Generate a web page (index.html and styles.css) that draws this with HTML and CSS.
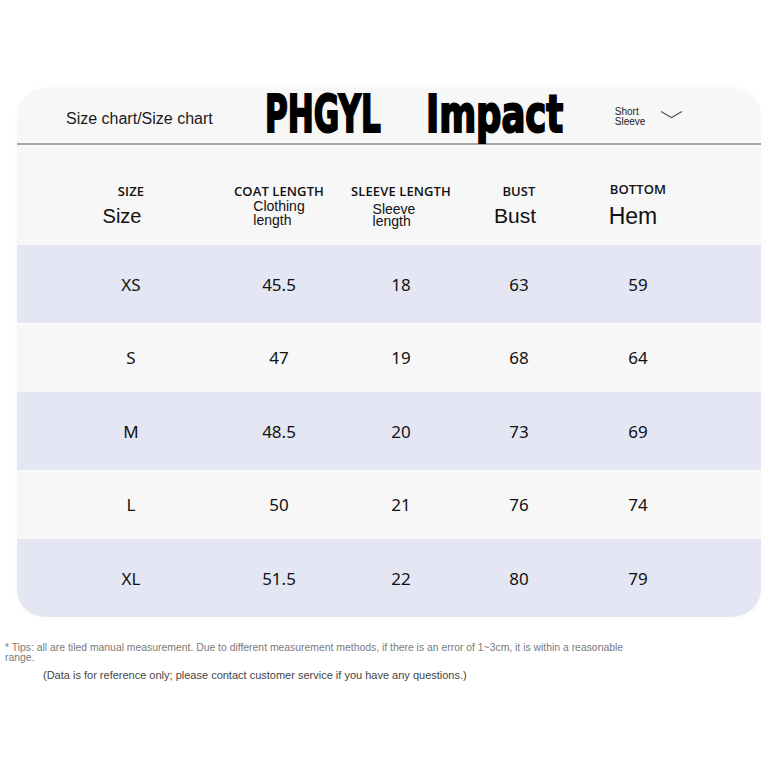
FILE: index.html
```html
<!DOCTYPE html>
<html lang="en">
<head>
<meta charset="utf-8">
<title>Size chart</title>
<link rel="stylesheet" href="styles.css">
</head>
<body>
<div class="page">
  <section class="card">
    <div class="titlebar">
      <span class="title">Size chart/Size chart</span>
      <span class="brand brand--a">PHGYL</span>
      <span class="brand brand--b">Impact</span>
      <span class="sleeve">Short<br>Sleeve</span>
      <svg class="chevron" width="23" height="9" viewBox="0 0 23 9"><polyline points="1,1.5 11.5,7.5 22,1.5" fill="none" stroke="#555" stroke-width="1.1"/></svg>
    </div>
    <div class="grid head">
      <div class="cell"><div class="cap">SIZE</div><div class="sub sub--big">Size</div></div>
      <div class="cell"><div class="cap">COAT LENGTH</div><div class="sub sub--two">Clothing<br>length</div></div>
      <div class="cell"><div class="cap">SLEEVE LENGTH</div><div class="sub sub--two sub--sleeve">Sleeve<br>length</div></div>
      <div class="cell"><div class="cap">BUST</div><div class="sub sub--bust">Bust</div></div>
      <div class="cell"><div class="cap cap--up">BOTTOM</div><div class="sub sub--hem">Hem</div></div>
    </div>
    <div class="grid row row--tint row--tall"><div class="cell">XS</div><div class="cell">45.5</div><div class="cell">18</div><div class="cell">63</div><div class="cell">59</div></div>
    <div class="grid row row--plain row--short"><div class="cell">S</div><div class="cell">47</div><div class="cell">19</div><div class="cell">68</div><div class="cell">64</div></div>
    <div class="grid row row--tint row--tall"><div class="cell">M</div><div class="cell">48.5</div><div class="cell">20</div><div class="cell">73</div><div class="cell">69</div></div>
    <div class="grid row row--plain row--short"><div class="cell">L</div><div class="cell">50</div><div class="cell">21</div><div class="cell">76</div><div class="cell">74</div></div>
    <div class="grid row row--tint row--tall"><div class="cell">XL</div><div class="cell">51.5</div><div class="cell">22</div><div class="cell">80</div><div class="cell">79</div></div>
  </section>
  <p class="tips">* Tips: all are tiled manual measurement. Due to different measurement methods, if there is an error of 1~3cm, it is within a reasonable<br>range.</p>
  <p class="note">(Data is for reference only; please contact customer service if you have any questions.)</p>
</div>
</body>
</html>
```
FILE: styles.css
```css
html, body {
  margin: 0;
  padding: 0;
  background: #ffffff;
}
.page {
  width: 784px;
  height: 780px;
  padding-top: 88px;
  box-sizing: border-box;
  font-family: "Liberation Sans", Arial, sans-serif;
  color: #111;
}
.card {
  margin-left: 17px;
  width: 744px;
  background: #f7f7f7;
  border-radius: 30px 30px 28px 28px;
  overflow: hidden;
  box-shadow: 0 0 6px rgba(0, 0, 0, 0.03);
}
.titlebar {
  height: 55px;
  display: flex;
  align-items: center;
  padding-left: 49px;
  border-bottom: 2px solid #a6a6a6;
  background: #f7f7f7;
}
.title {
  font-size: 16px;
  color: #1a1a1a;
  width: 146px;
  white-space: nowrap;
  margin-top: 7px;
}
.brand {
  display: inline-block;
  font-family: "DejaVu Sans Condensed", "DejaVu Sans", sans-serif;
  font-weight: bold;
  font-size: 51px;
  line-height: 1.2;
  color: #000;
  white-space: nowrap;
  transform-origin: 0 50%;
  -webkit-text-stroke: 2px #000;
  margin-top: -1px;
}
.brand--a {
  margin-left: 53px;
  transform: scaleX(0.678);
  margin-right: -55px;
}
.brand--b {
  margin-left: 45px;
  transform: scaleX(0.772);
  margin-right: -40px;
}
.sleeve {
  margin-left: 51px;
  font-size: 10px;
  line-height: 10px;
  color: #222;
  width: 33px;
  margin-top: 2px;
}
.chevron {
  margin-left: 12px;
  margin-top: -2px;
}
.grid {
  display: grid;
  grid-template-columns: 148px 148px 96px 140px 98px;
  padding-left: 40px;
}
.cell {
  display: flex;
  flex-direction: column;
  align-items: center;
  justify-content: center;
  white-space: nowrap;
}
.head {
  height: 100px;
  background: #f7f7f7;
  align-items: start;
  padding-top: 39px;
  box-sizing: border-box;
}
.head .cell {
  justify-content: flex-start;
}
.cap {
  font-family: "Open Sans", "Noto Sans", sans-serif;
  font-weight: 600;
  font-size: 13px;
  line-height: 14px;
  color: #111;
  letter-spacing: 0.1px;
}
.cap--up { margin-top: -2px; }
.sub {
  color: #111;
}
.sub--big {
  font-size: 20px;
  line-height: 22px;
  margin-top: 7px;
  margin-left: -18px;
}
.sub--two {
  font-size: 14px;
  line-height: 14px;
  text-align: left;
  margin-top: 1px;
}
.sub--sleeve {
  line-height: 12px;
  margin-top: 5px;
  margin-left: -14px;
}
.sub--bust {
  font-size: 21px;
  line-height: 22px;
  margin-top: 7px;
  margin-left: -8px;
}
.sub--hem {
  font-size: 23px;
  line-height: 24px;
  margin-top: 8px;
  margin-left: -10px;
}
.row {
  font-family: "Noto Sans", "Open Sans", sans-serif;
  font-size: 17px;
  color: #111;
}
.row--tall { height: 78px; }
.row--short { height: 69px; }
.row--tint { background: #e4e7f3; }
.row--plain {
  background: #f7f7f7;
  box-shadow: inset 0 2px 0 #fbfbfb;
}
.tips {
  margin: 26px 0 0 5px;
  font-size: 10.4px;
  line-height: 10px;
  color: #7a7a7a;
  white-space: nowrap;
}
.note {
  margin: 6px 0 0 43px;
  font-size: 11px;
  line-height: 12px;
  color: #444;
  white-space: nowrap;
}
```
